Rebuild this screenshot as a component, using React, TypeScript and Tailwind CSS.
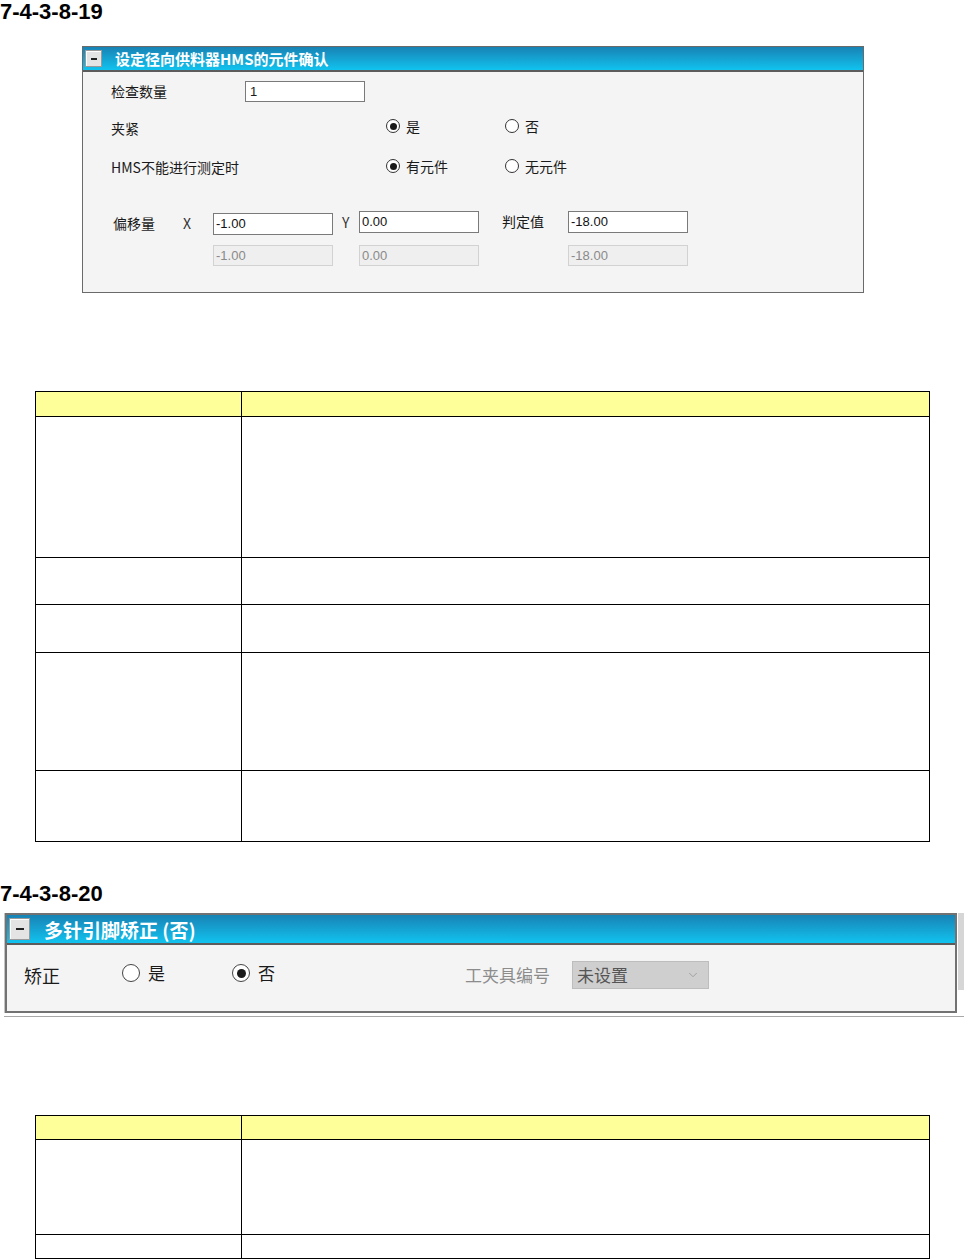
import React from 'react';
import { ChevronDown } from 'lucide-react';

const UI_FONT = "font-['Noto_Sans_CJK_SC','Noto_Sans',sans-serif]";

const Radio: React.FC<{ checked?: boolean; big?: boolean; label: string }> = ({ checked, big, label }) => (
  <div className="flex items-center">
    <span
      className={`flex items-center justify-center rounded-full bg-white border ${
        big ? 'w-[18px] h-[18px] border-[#444]' : 'w-[14px] h-[14px] border-[#333]'
      }`}
    >
      {checked && <span className={`rounded-full bg-[#1a1a1a] ${big ? 'w-[9px] h-[9px]' : 'w-[7px] h-[7px]'}`} />}
    </span>
    <span className={big ? 'ml-[8px] text-[17px]' : 'ml-[6px] text-[14px]'}>{label}</span>
  </div>
);

const Field: React.FC<{ value: string; disabled?: boolean; className?: string }> = ({ value, disabled, className }) => (
  <div
    className={`w-[120px] flex items-center pl-[2px] font-['Liberation_Sans',sans-serif] text-[13px] ${
      disabled ? 'h-[21px] bg-[#efefef] border border-[#d2d2d2] text-[#8a8a8a]' : 'h-[22px] bg-white border border-[#7a7a7a] text-[#111]'
    } ${className ?? ''}`}
  >
    {value}
  </div>
);

const MinusBox: React.FC<{ big?: boolean }> = ({ big }) => (
  <div
    className={`flex items-center justify-center bg-[#e4e4e4] border border-[#9a9a9a] shadow-[inset_1px_1px_0_#fff] ${
      big ? 'w-[21px] h-[22px]' : 'w-[17px] h-[17px]'
    }`}
  >
    <span className={`bg-[#222] ${big ? 'w-[8px] h-[2px]' : 'w-[6px] h-[2px]'}`} />
  </div>
);

const Heading: React.FC<{ text: string; className?: string }> = ({ text, className }) => (
  <div className={`h-[24px] leading-[24px] text-[22px] font-bold text-black font-['Liberation_Sans',Arial,sans-serif] ${className ?? ''}`}>
    {text}
  </div>
);

const SpecTable: React.FC<{ rows: number[] }> = ({ rows }) => (
  <div className="ml-[35px] w-[895px] border-l border-t border-black grid grid-cols-[206px_688px]">
    {rows.map((h, i) => (
      <React.Fragment key={i}>
        <div style={{ height: h }} className={`border-r border-b border-black ${i === 0 ? 'bg-[#ffff99]' : 'bg-white'}`} />
        <div style={{ height: h }} className={`border-r border-b border-black ${i === 0 ? 'bg-[#ffff99]' : 'bg-white'}`} />
      </React.Fragment>
    ))}
  </div>
);

const HmsPanel: React.FC = () => (
  <div className={`ml-[82px] mt-[22px] w-[782px] h-[247px] border border-[#6a6a6a] bg-[#f4f4f4] flex flex-col ${UI_FONT} text-[#1a1a1a]`}>
    <div className="h-[25px] border-b-2 border-[#5c5c5c] bg-gradient-to-b from-[#1783b5] to-[#10c3ef] flex items-center pl-[2px]">
      <MinusBox />
      <span className="ml-[13px] text-white font-bold text-[15px] leading-none">设定径向供料器HMS的元件确认</span>
    </div>

    <div className="flex flex-col pl-[28px] text-[14px]">
      <div className="mt-[9px] h-[21px] flex items-center">
        <span className="w-[134px]">检查数量</span>
        <div className="w-[120px] h-[21px] bg-white border border-[#7a7a7a] flex items-center pl-[4px] font-['Liberation_Sans',sans-serif] text-[13px]">1</div>
      </div>

      <div className="mt-[14px] h-[20px] flex items-center">
        <span className="w-[275px] pt-[4px]">夹紧</span>
        <div className="w-[119px]"><Radio checked label="是" /></div>
        <Radio label="否" />
      </div>

      <div className="mt-[20px] h-[20px] flex items-center">
        <span className="w-[275px] pt-[2px]">HMS不能进行测定时</span>
        <div className="w-[119px]"><Radio checked label="有元件" /></div>
        <Radio label="无元件" />
      </div>

      <div className="mt-[35px] h-[24px] flex items-start pl-[2px]">
        <span className="w-[70px] mt-[2px]">偏移量</span>
        <span className="w-[30px] mt-[2px] text-[#333]">X</span>
        <Field value="-1.00" className="mt-[2px]" />
        <span className="w-[26px] pl-[9px] mt-[1px] text-[#333]">Y</span>
        <Field value="0.00" />
        <span className="w-[89px] pl-[23px]">判定值</span>
        <Field value="-18.00" />
      </div>

      <div className="mt-[10px] h-[21px] flex items-center pl-[2px]">
        <span className="w-[100px]" />
        <Field value="-1.00" disabled />
        <span className="w-[26px]" />
        <Field value="0.00" disabled />
        <span className="w-[89px]" />
        <Field value="-18.00" disabled />
      </div>
    </div>
  </div>
);

const StraightenPanel: React.FC = () => (
  <div className={`mt-[7px] ml-[4px] w-[960px] border-b border-[#a8a8a8] pb-[3px] ${UI_FONT}`}>
    <div className="flex items-start">
      <div className="w-[953px] border-l border-[#c4c4c4]">
        <div className="border-2 border-[#727272] bg-[#f4f4f4] flex flex-col">
          <div className="h-[30px] border-b-2 border-[#5c5c5c] bg-gradient-to-b from-[#1783b5] to-[#10c3ef] flex items-center pl-[2px]">
            <MinusBox big />
            <span className="ml-[14px] text-white font-bold text-[19px] leading-none">多针引脚矫正 (否)</span>
          </div>
          <div className="h-[66px] pt-[15px] pl-[17px]">
            <div className="h-[26px] flex items-center text-[#1a1a1a]">
              <span className="w-[98px] text-[18px] pt-[4px]">矫正</span>
              <div className="w-[110px]"><Radio big label="是" /></div>
              <div className="w-[233px]"><Radio big checked label="否" /></div>
              <span className="w-[107px] text-[17px] text-[#8c8c8c] pt-[4px]">工夹具编号</span>
              <div className="w-[137px] h-[28px] bg-[#cfcfcf] border border-[#bdbdbd] flex items-center justify-between pl-[4px] pr-[8px] mt-[4px]">
                <span className="text-[17px] text-[#555]">未设置</span>
                <ChevronDown size={14} strokeWidth={1.5} className="text-[#9a9a9a]" />
              </div>
            </div>
          </div>
        </div>
      </div>
      <div className="ml-[1px] w-[6px] h-[77px] bg-[#d6d6d6]" />
    </div>
  </div>
);

export default function App() {
  return (
    <div className="w-[964px] h-[1260px] bg-white overflow-hidden">
      <Heading text="7-4-3-8-19" />
      <HmsPanel />
      <div className="mt-[98px]">
        <SpecTable rows={[25, 141, 47, 48, 118, 71]} />
      </div>
      <Heading text="7-4-3-8-20" className="mt-[40px]" />
      <StraightenPanel />
      <div className="mt-[98px]">
        <SpecTable rows={[24, 95, 24]} />
      </div>
    </div>
  );
}
